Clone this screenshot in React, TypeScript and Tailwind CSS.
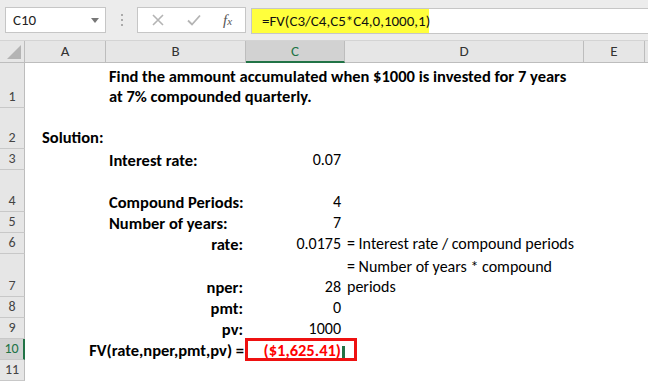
import React from 'react';

const font = "font-['Carlito','Lato','Liberation_Sans',sans-serif]";

type RowProps = { n: string; h: string; selected?: boolean; children?: React.ReactNode };

const Row: React.FC<RowProps> = ({ n, h, selected, children }) => (
  <div className={`flex ${h}`}>
    <div
      className={`w-[25px] shrink-0 flex items-end justify-center pb-[1px] text-[14px] leading-[18px] border-b border-[#c8c8c8] ${
        selected ? 'bg-[#d2d2d2] text-[#217346] border-r-2 border-r-[#217346]' : 'bg-[#e6e6e6] text-[#444] border-r border-r-[#bdbdbd]'
      }`}
    >
      {n}
    </div>
    <div className="flex flex-1 items-end bg-white text-[16px] leading-[20px] text-black">{children}</div>
  </div>
);

const ColHead: React.FC<{ w: string; label: string; selected?: boolean }> = ({ w, label, selected }) => (
  <div
    className={`${w} shrink-0 flex items-center justify-center border-r border-[#bdbdbd] text-[15px] ${
      selected ? 'bg-[#d2d2d2] text-[#217346] border-b-2 border-b-[#217346]' : 'bg-[#e6e6e6] text-[#333] border-b border-b-[#bdbdbd]'
    }`}
  >
    {label}
  </div>
);

const A = 'w-[81px] shrink-0';
const B = 'w-[140px] shrink-0';
const C = 'w-[99px] shrink-0';
const D = 'w-[239px] shrink-0';
const bold = 'font-bold text-[16.5px]';

export default function App() {
  return (
    <div className={`w-[648px] h-[381px] overflow-hidden bg-white ${font}`}>
      {/* formula toolbar */}
      <div className="h-[41px] bg-[#ececec] flex items-start pt-[7px] pl-[5px] border-b border-[#d4d4d4]">
        <div className="w-[101px] h-[26px] bg-white border border-[#c6c6c6] flex items-center justify-between pl-[7px] pr-[6px] text-[15px] text-[#222]">
          <span>C10</span>
          <svg width="8" height="5" viewBox="0 0 8 5">
            <path d="M0 0 L8 0 L4 5 Z" fill="#777" />
          </svg>
        </div>
        <div className="w-[31px] h-[26px] flex flex-col items-center justify-center gap-[3px]">
          <span className="w-[2px] h-[2px] bg-[#aaa]" />
          <span className="w-[2px] h-[2px] bg-[#aaa]" />
          <span className="w-[2px] h-[2px] bg-[#aaa]" />
        </div>
        <div className="w-[109px] h-[26px] bg-white border border-[#c6c6c6] flex items-center pl-[13px]">
          <svg width="12" height="12" viewBox="0 0 12 12" className="ml-[1px]">
            <path d="M1 1 L11 11 M11 1 L1 11" stroke="#b4b4b4" strokeWidth="1.6" />
          </svg>
          <svg width="14" height="12" viewBox="0 0 14 12" className="ml-[23px]">
            <path d="M1 6.5 L5 10.5 L13 1.5" stroke="#b4b4b4" strokeWidth="1.8" fill="none" />
          </svg>
          <span className="ml-[22px] text-[15px] italic text-[#555] font-['Liberation_Serif',serif]">
            f<span className="text-[11px]">x</span>
          </span>
        </div>
        <div className="ml-[5px] flex-1 h-[26px] mt-[1px] bg-white border-y border-l border-[#c6c6c6] flex">
          <div className="w-[177px] h-full bg-[#ffff3c] flex items-center pl-[10px] text-[15px] text-[#111]">
            =FV(C3/C4,C5*C4,0,1000,1)
          </div>
        </div>
      </div>

      {/* column headers */}
      <div className="flex h-[22px]">
        <div className="w-[25px] shrink-0 bg-[#e6e6e6] border-r border-b border-[#bdbdbd] flex items-end justify-end pr-[3px] pb-[3px]">
          <svg width="14" height="14" viewBox="0 0 14 14">
            <path d="M14 0 L14 14 L0 14 Z" fill="#b4b4b4" />
          </svg>
        </div>
        <ColHead w="w-[81px]" label="A" />
        <ColHead w="w-[140px]" label="B" />
        <ColHead w="w-[99px]" label="C" selected />
        <ColHead w="w-[239px]" label="D" />
        <ColHead w="w-[61px]" label="E" />
        <div className="flex-1 bg-[#e6e6e6] border-b border-[#bdbdbd]" />
      </div>

      {/* sheet rows */}
      <Row n="1" h="h-[45px]">
        <div className={A} />
        <div className={`w-[500px] shrink-0 pl-[3px] pb-[2px] whitespace-nowrap ${bold}`}>
          Find the ammount accumulated when $1000 is invested for 7 years
          <br />
          at 7% compounded quarterly.
        </div>
      </Row>
      <Row n="2" h="h-[41px]">
        <div className={`${A} pl-[17px] pb-[2px] whitespace-nowrap ${bold}`}>Solution:</div>
      </Row>
      <Row n="3" h="h-[21px]">
        <div className={A} />
        <div className={`${B} pl-[3px] ${bold}`}>Interest rate:</div>
        <div className={`${C} text-right pr-[4px]`}>0.07</div>
      </Row>
      <Row n="4" h="h-[42px]">
        <div className={A} />
        <div className={`${B} pl-[3px] whitespace-nowrap ${bold}`}>Compound Periods:</div>
        <div className={`${C} text-right pr-[4px]`}>4</div>
      </Row>
      <Row n="5" h="h-[21px]">
        <div className={A} />
        <div className={`${B} pl-[3px] whitespace-nowrap ${bold}`}>Number of years:</div>
        <div className={`${C} text-right pr-[4px]`}>7</div>
      </Row>
      <Row n="6" h="h-[21px]">
        <div className={A} />
        <div className={`${B} text-right pr-[3px] ${bold}`}>rate:</div>
        <div className={`${C} text-right pr-[4px]`}>0.0175</div>
        <div className={`${D} pl-[2px] whitespace-nowrap`}>= Interest rate / compound periods</div>
      </Row>
      <Row n="7" h="h-[43px]">
        <div className={A} />
        <div className={`${B} text-right pr-[3px] ${bold}`}>nper:</div>
        <div className={`${C} text-right pr-[4px]`}>28</div>
        <div className={`${D} pl-[2px] whitespace-nowrap`}>
          = Number of years * compound
          <br />
          periods
        </div>
      </Row>
      <Row n="8" h="h-[21px]">
        <div className={A} />
        <div className={`${B} text-right pr-[3px] ${bold}`}>pmt:</div>
        <div className={`${C} text-right pr-[4px]`}>0</div>
      </Row>
      <Row n="9" h="h-[21px]">
        <div className={A} />
        <div className={`${B} text-right pr-[3px] ${bold}`}>pv:</div>
        <div className={`${C} text-right pr-[4px]`}>1000</div>
      </Row>
      <Row n="10" h="h-[21px]" selected>
        <div className={A} />
        <div className={`${B} text-right pr-[3px] whitespace-nowrap flex justify-end ${bold}`}>
          <span className="-mr-[1px]">FV(rate,nper,pmt,pv) =</span>
        </div>
        <div className={`${C} relative h-full flex items-end justify-end pr-[4px] text-[#ff0000] ${bold}`}>
          ($1,625.41)
          <span className="absolute right-[0px] bottom-[2px] w-[3px] h-[12px] bg-[#217346]" />
          <span className="absolute -left-[1px] -top-[1px] -bottom-[1px] -right-[12px] border-[3px] border-[#ee1111]" />
        </div>
      </Row>
      <Row n="11" h="h-[21px]" />
    </div>
  );
}
